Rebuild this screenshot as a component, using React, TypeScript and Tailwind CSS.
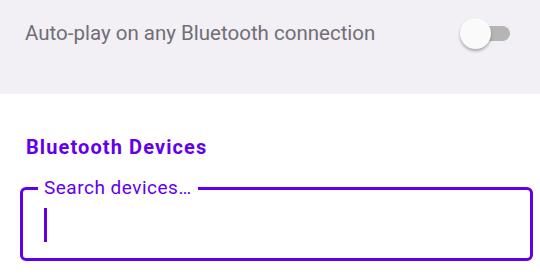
import React from 'react';

const Toggle: React.FC = () => (
  <div className="relative w-[50px] h-[32px] flex items-center">
    {/* track */}
    <div className="absolute left-[11px] right-0 h-[15px] rounded-full bg-[#b5b5b5]" />
    {/* thumb */}
    <div className="absolute left-0 w-[31px] h-[31px] rounded-full bg-[#fafafa] shadow-[0_2px_3px_rgba(0,0,0,0.3)]" />
  </div>
);

export default function App() {
  return (
    <div className="w-[540px] h-[275px] bg-white overflow-hidden font-['Roboto',sans-serif]">
      <div className="h-[94px] bg-[#f2eff5] pl-[25px] pr-[30px] pt-[17px]">
        <div className="flex items-center justify-between h-[32px]">
          <span className="text-[20.5px] text-[#726e77]">Auto-play on any Bluetooth connection</span>
          <Toggle />
        </div>
      </div>
      <div className="pl-[20px] pr-[7px] pt-[40px]">
        <h2 className="ml-[6px] text-[20px] font-bold tracking-[1.1px] text-[#6200ee] leading-[26px]">
          Bluetooth Devices
        </h2>
        <fieldset className="mt-[18px] h-[83px] border-[3px] border-[#6200ee] rounded-[6px] px-[21px]">
          <legend className="px-[6px] -ml-[6px] text-[19px] tracking-[0.5px] text-[#6200ee] leading-[20px]">
            Search devices…
          </legend>
          <div className="mt-[10px] w-[3px] h-[34px] bg-[#6200ee]" />
        </fieldset>
      </div>
    </div>
  );
}
